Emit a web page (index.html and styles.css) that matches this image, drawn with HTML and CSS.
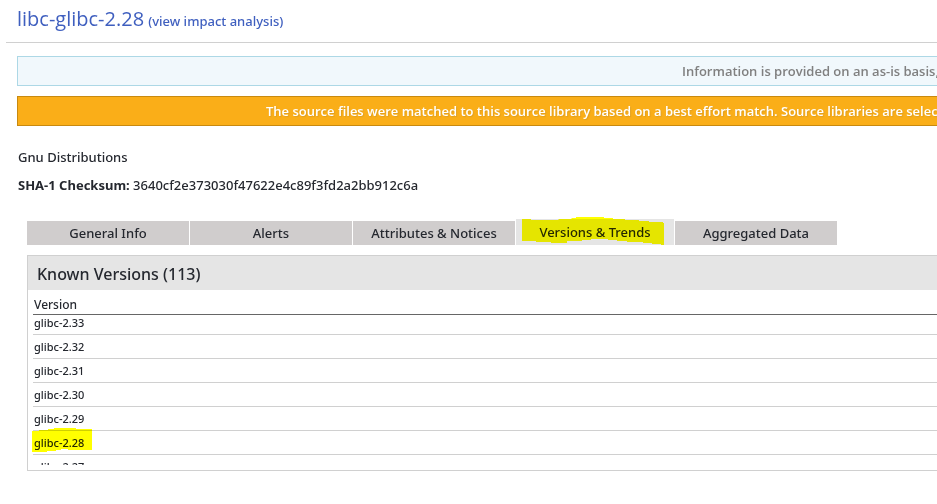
FILE: index.html
```html
<!DOCTYPE html>
<html lang="en">
<head>
	<meta charset="UTF-8" />
	<meta name="viewport" content="width=device-width, initial-scale=1.0" />
	<title>libc-glibc-2.28</title>
	<link rel="stylesheet" href="styles.css">
</head>
<body>
	<header class="page-header">
		<h1>libc-glibc-2.28</h1>
		<a href="#impact">(view impact analysis)</a>
	</header>

	<main>
		<div class="banner banner-info">Information is provided on an as-is basis,</div>
		<div class="banner banner-warning">The source files were matched to this source library based on a best effort match. Source libraries are selected</div>

		<section class="details">
			<p>Gnu Distributions</p>
			<p><strong>SHA-1 Checksum:</strong> 3640cf2e373030f47622e4c89f3fd2a2bb912c6a</p>
		</section>

		<nav class="tabs">
			<button type="button" class="tab">General Info</button>
			<button type="button" class="tab">Alerts</button>
			<button type="button" class="tab">Attributes &amp; Notices</button>
			<button type="button" class="tab active">Versions &amp; Trends
				<svg class="marker marker-tab" width="142" height="28" viewBox="0 0 142 28" aria-hidden="true"><path fill="#ff0" d="M0 2h9v1h27l1-1h12l1-1h4V0h28v1h9v1h12v1h14v1h10v1h14v1h11v22h-13v-1h-9v-1h-9v-1h-16v-1h-10v-1h-9v-1H69v1h-9v1h-15v2H29v-1H14v-1H0z"/></svg>
			</button>
			<button type="button" class="tab">Aggregated Data</button>
		</nav>

		<section class="panel">
			<h2>Known Versions (113)</h2>
			<div class="table-wrap">
				<table class="versions">
					<thead>
						<tr><th>Version</th></tr>
					</thead>
					<tbody>
						<tr><td>glibc-2.33</td></tr>
						<tr><td>glibc-2.32</td></tr>
						<tr><td>glibc-2.31</td></tr>
						<tr><td>glibc-2.30</td></tr>
						<tr><td>glibc-2.29</td></tr>
						<tr>
							<td><span class="marked">glibc-2.28
								<svg class="marker marker-row" width="60" height="24" viewBox="0 0 60 24" aria-hidden="true"><path fill="#ff0" d="M0 3h7V2h9V1h6V0h22v1h16v21H36v-1h-7v1h-5v1h-9v1H0z"/></svg>
							</span></td>
						</tr>
						<tr><td>glibc-2.27</td></tr>
					</tbody>
				</table>
			</div>
		</section>
	</main>
</body>
</html>
```
FILE: styles.css
```css
body {
	font-family: "Noto Sans", "Open Sans", sans-serif;
	font-size: 13px;
	font-weight: 500;
	line-height: 20px;
	margin: 0;
	background: #fff;
	color: #25282f;
	overflow-x: hidden;
}
.page-header {
	display: flex;
	align-items: baseline;
	gap: 4px;
	margin-left: 6px;
	padding: 4px 0 8px 11px;
	border-bottom: 1px solid #d0d0d0;
}
.page-header h1 {
	font-family: "Open Sans", "Noto Sans", sans-serif;
	font-size: 20px;
	font-weight: 500;
	line-height: 30px;
	margin: 0;
	color: #3f5fbf;
}
.page-header a {
	color: #3f5fbf;
	text-decoration: none;
}
main {
	padding: 13px 0 0 17px;
}

/* Banners */
.banner {
	box-sizing: border-box;
	height: 30px;
	margin-bottom: 10px;
	border: 1px solid;
	border-right: none;
	font-family: "Open Sans", "Noto Sans", sans-serif;
	line-height: 28px;
	font-weight: 600;
	white-space: nowrap;
	overflow: hidden;
}
.banner-info {
	padding-left: 664px;
	background: #f1f8fc;
	border-color: #add8e6;
	color: #808080;
}
.banner-warning {
	padding-left: 248px;
	background: #faae18;
	border-color: #c8890f;
	color: #fff;
	text-shadow: 1px 1px 1px #e0a020;
}

.details {
	padding: 11px 0 0 1px;
}
.details p {
	margin: 0 0 8px;
}
.details strong {
	font-weight: 700;
}

/* Tabs */
.tabs {
	display: flex;
	align-items: flex-end;
	gap: 1px;
	margin: 24px 0 0 10px;
}
.tab {
	width: 162px;
	height: 24px;
	padding: 0;
	border: none;
	background: #d0cdcd;
	color: inherit;
	font: inherit;
}
.tab.active {
	position: relative;
	width: 158px;
	height: 26px;
	background: #e5e5e5;
}

/* Highlighter strokes over the text */
.marker {
	position: absolute;
	mix-blend-mode: multiply;
	pointer-events: none;
}
.marker-tab {
	top: -2px;
	left: 6px;
}
.marked {
	position: relative;
}
.marker-row {
	top: -7px;
	left: -2px;
}

/* Versions */
.panel {
	margin: 10px 0 0 10px;
	border: 1px solid #d0d0d0;
	border-right: none;
}
.panel h2 {
	margin: 0;
	padding: 2px 9px 0;
	background: #e5e5e5;
	font-size: 16px;
	font-weight: 500;
	line-height: 32px;
}
.table-wrap {
	height: 175px;
	margin-bottom: 5px;
	padding-left: 5px;
	overflow: hidden;
}
.versions {
	width: 100%;
	border-collapse: separate;
	border-spacing: 0;
}
.versions th {
	padding: 5px 1px 0;
	border-bottom: 1px solid #666;
	font-size: 12px;
	font-weight: 500;
	line-height: 19px;
	text-align: left;
}
.versions td {
	padding: 4px 1px 3px;
	border-bottom: 1px solid #d0d0d0;
	font-size: 11px;
	line-height: 16px;
}
.versions tbody tr:first-child td {
	padding-top: 0;
}
```
